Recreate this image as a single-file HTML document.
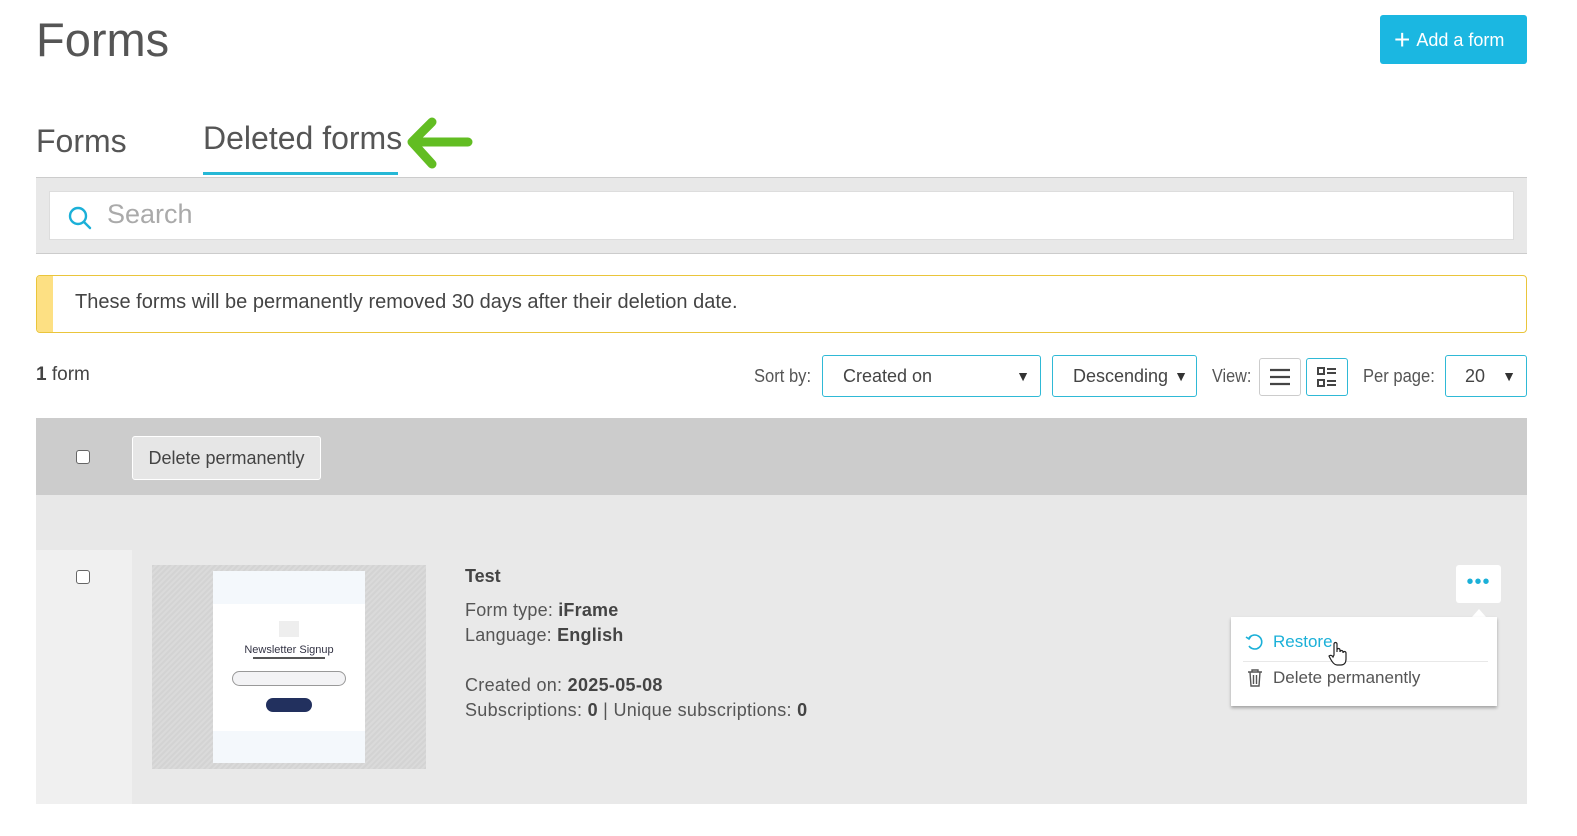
<!DOCTYPE html>
<html><head><meta charset="utf-8">
<style>
*{box-sizing:border-box;margin:0;padding:0}
body{width:1577px;height:836px;background:#fff;font-family:"Liberation Sans",sans-serif;color:#555;position:relative;overflow:hidden}
.abs{position:absolute}
.sel{position:absolute;top:355px;height:42px;border:1px solid #2fb9d6;border-radius:3px;background:#fff;font-size:18px;color:#444;line-height:40px}
.sel .ar{position:absolute;right:10px;top:0;font-size:14px;color:#333}
.cb{position:absolute;width:14px;height:14px;border:1px solid #666;border-radius:3px;background:#fff}
</style></head><body>
<div class="abs" style="left:36px;top:12px;font-size:47px;color:#555">Forms</div>
<div class="abs" style="left:1380px;top:15px;width:147px;height:49px;background:#1bb7e1;border-radius:3px;color:#fff;font-size:18px;line-height:49px;padding-left:14px"><span style="font-size:28px;vertical-align:-3px;margin-right:6px">+</span>Add a form</div>

<div class="abs" style="left:36px;top:123px;font-size:32px;color:#555">Forms</div>
<div class="abs" style="left:203px;top:120px;font-size:32px;color:#555">Deleted forms</div>
<div class="abs" style="left:203px;top:172px;width:195px;height:3px;background:#26b8d6"></div>
<svg class="abs" style="left:402px;top:114px" width="74" height="58" viewBox="0 0 74 58"><path d="M66 28H12M30 8L10 28L30 50" stroke="#62bd22" stroke-width="9" fill="none" stroke-linecap="round" stroke-linejoin="round"/></svg>

<div class="abs" style="left:36px;top:177px;width:1491px;height:77px;background:#e8e8e8;border-top:1px solid #ccc;border-bottom:1px solid #ccc"></div>
<div class="abs" style="left:49px;top:191px;width:1465px;height:49px;background:#fff;border:1px solid #ddd"></div>
<svg class="abs" style="left:67px;top:204px" width="28" height="28" viewBox="0 0 28 28"><circle cx="11" cy="12" r="8" stroke="#1bb0d8" stroke-width="2.4" fill="none"/><path d="M17 18l6 6" stroke="#1bb0d8" stroke-width="2.4" stroke-linecap="round"/></svg>
<div class="abs" style="left:107px;top:199px;font-size:27px;color:#aaa">Search</div>

<div class="abs" style="left:36px;top:275px;width:1491px;height:58px;border:1px solid #eac53b;border-radius:4px;background:#fff;overflow:hidden"><div style="position:absolute;left:0;top:0;bottom:0;width:16px;background:#fde083"></div></div>
<div class="abs" style="left:75px;top:291px;font-size:20px;color:#444">These forms will be permanently removed 30 days after their deletion date.</div>

<div class="abs" style="left:36px;top:364px;font-size:19px;color:#444"><b>1</b> form</div>
<div class="abs" style="left:754px;top:366px;font-size:18px;color:#555;transform:scaleX(.92);transform-origin:left">Sort by:</div>
<div class="sel" style="left:822px;width:219px;padding-left:20px">Created on<span class="ar">▼</span></div>
<div class="sel" style="left:1052px;width:145px;padding-left:20px">Descending<span class="ar" style="right:8px">▼</span></div>
<div class="abs" style="left:1212px;top:366px;font-size:18px;color:#555;transform:scaleX(.9);transform-origin:left">View:</div>
<div class="abs" style="left:1259px;top:358px;width:42px;height:38px;border:1px solid #ccc;border-radius:3px;background:#fff"><svg width="40" height="36" viewBox="0 0 40 36"><path d="M10 11h20M10 18h20M10 25h20" stroke="#444" stroke-width="2.2"/></svg></div>
<div class="abs" style="left:1306px;top:358px;width:42px;height:38px;border:1px solid #2fb9d6;border-radius:3px;background:#fff"><svg width="40" height="36" viewBox="0 0 40 36"><rect x="11" y="9" width="6" height="6" fill="none" stroke="#444" stroke-width="2"/><rect x="11" y="21" width="6" height="6" fill="none" stroke="#444" stroke-width="2"/><path d="M20 10h9M20 14h9M20 22h9M20 26h9" stroke="#444" stroke-width="2"/></svg></div>
<div class="abs" style="left:1363px;top:366px;font-size:18px;color:#555;transform:scaleX(.92);transform-origin:left">Per page:</div>
<div class="sel" style="left:1445px;width:82px;padding-left:19px">20<span class="ar">▼</span></div>

<div class="abs" style="left:36px;top:418px;width:1491px;height:77px;background:#cccccc"></div>
<div class="cb" style="left:76px;top:450px"></div>
<div class="abs" style="left:132px;top:436px;width:189px;height:44px;border:1px solid #fff;border-radius:3px;background:#e6e6e6;font-size:18px;color:#444;line-height:42px;text-align:center">Delete permanently</div>
<div class="abs" style="left:36px;top:495px;width:1491px;height:55px;background:#e8e8e8"></div>
<div class="abs" style="left:36px;top:550px;width:96px;height:254px;background:#f0f0f0"></div>
<div class="abs" style="left:132px;top:550px;width:1395px;height:254px;background:#e9e9e9"></div>
<div class="cb" style="left:76px;top:570px"></div>

<div class="abs" style="left:152px;top:565px;width:274px;height:204px;background:repeating-linear-gradient(135deg,#d3d3d3 0 2px,#dadada 2px 4px)"></div>
<div class="abs" style="left:213px;top:571px;width:152px;height:192px;background:#f4f8fc">
 <div style="position:absolute;left:0;top:33px;width:152px;height:127px;background:#fff"></div>
 <div style="position:absolute;left:66px;top:50px;width:20px;height:16px;background:#eee"></div>
 <div style="position:absolute;left:0;width:152px;top:73px;text-align:center;font-size:11px;color:#334">Newsletter Signup</div>
 <div style="position:absolute;left:40px;top:86px;width:72px;height:2px;background:#555"></div>
 <div style="position:absolute;left:19px;top:100px;width:114px;height:15px;border:1px solid #999;border-radius:8px;background:#f3f3f5"></div>
 <div style="position:absolute;left:53px;top:127px;width:46px;height:14px;border-radius:7px;background:#22305e"></div>
</div>

<div class="abs" style="left:465px;top:566px;font-size:18px;color:#444;font-weight:bold">Test</div>
<div class="abs" style="left:465px;top:598px;font-size:18px;color:#555;line-height:25px;letter-spacing:.2px">Form type: <b style="color:#444">iFrame</b><br>Language: <b style="color:#444">English</b></div>
<div class="abs" style="left:465px;top:673px;font-size:18px;color:#555;line-height:25px;letter-spacing:.3px">Created on: <b style="color:#444">2025-05-08</b><br>Subscriptions: <b style="color:#444">0</b> | Unique subscriptions: <b style="color:#444">0</b></div>

<div class="abs" style="left:1456px;top:565px;width:45px;height:38px;background:#fff;border-radius:3px;color:#1bb0d8;font-size:20px;text-align:center;line-height:34px;letter-spacing:1px">•••</div>
<div class="abs" style="left:1472px;top:609px;width:0;height:0;border-left:7px solid transparent;border-right:7px solid transparent;border-bottom:8px solid #fff"></div>
<div class="abs" style="left:1231px;top:617px;width:266px;height:89px;background:#fff;box-shadow:0 2px 3px rgba(0,0,0,.3)"></div>
<div class="abs" style="left:1243px;top:661px;width:245px;height:1px;background:#e8e8e8"></div>
<svg class="abs" style="left:1245px;top:632px" width="20" height="20" viewBox="0 0 20 20"><path d="M4 6A7 7 0 1 1 4 14" stroke="#1bb0d8" stroke-width="1.6" fill="none"/><path d="M1 5l3 2 2-3" stroke="#1bb0d8" stroke-width="1.6" fill="none"/></svg>
<div class="abs" style="left:1273px;top:632px;font-size:17px;color:#1bb0d8">Restore</div>
<svg class="abs" style="left:1328px;top:641px" width="20" height="26" viewBox="0 0 20 26"><path d="M6 14V3a1.5 1.5 0 0 1 3 0v8v-2a1.5 1.5 0 0 1 3 0v2a1.5 1.5 0 0 1 3 0v1a1.5 1.5 0 0 1 3 0v6c0 4-2 6-5 6H9c-3 0-5-3-7-7l-1-2c1-1 3-1 4 1z" fill="#fff" stroke="#222" stroke-width="1.2"/></svg>
<svg class="abs" style="left:1245px;top:668px" width="20" height="20" viewBox="0 0 20 20"><path d="M3 4h14M7 4V2h6v2M5 4l1 14h8l1-14M8.5 7v9M11.5 7v9" stroke="#555" stroke-width="1.4" fill="none"/></svg>
<div class="abs" style="left:1273px;top:668px;font-size:17px;color:#555">Delete permanently</div>
</body></html>
